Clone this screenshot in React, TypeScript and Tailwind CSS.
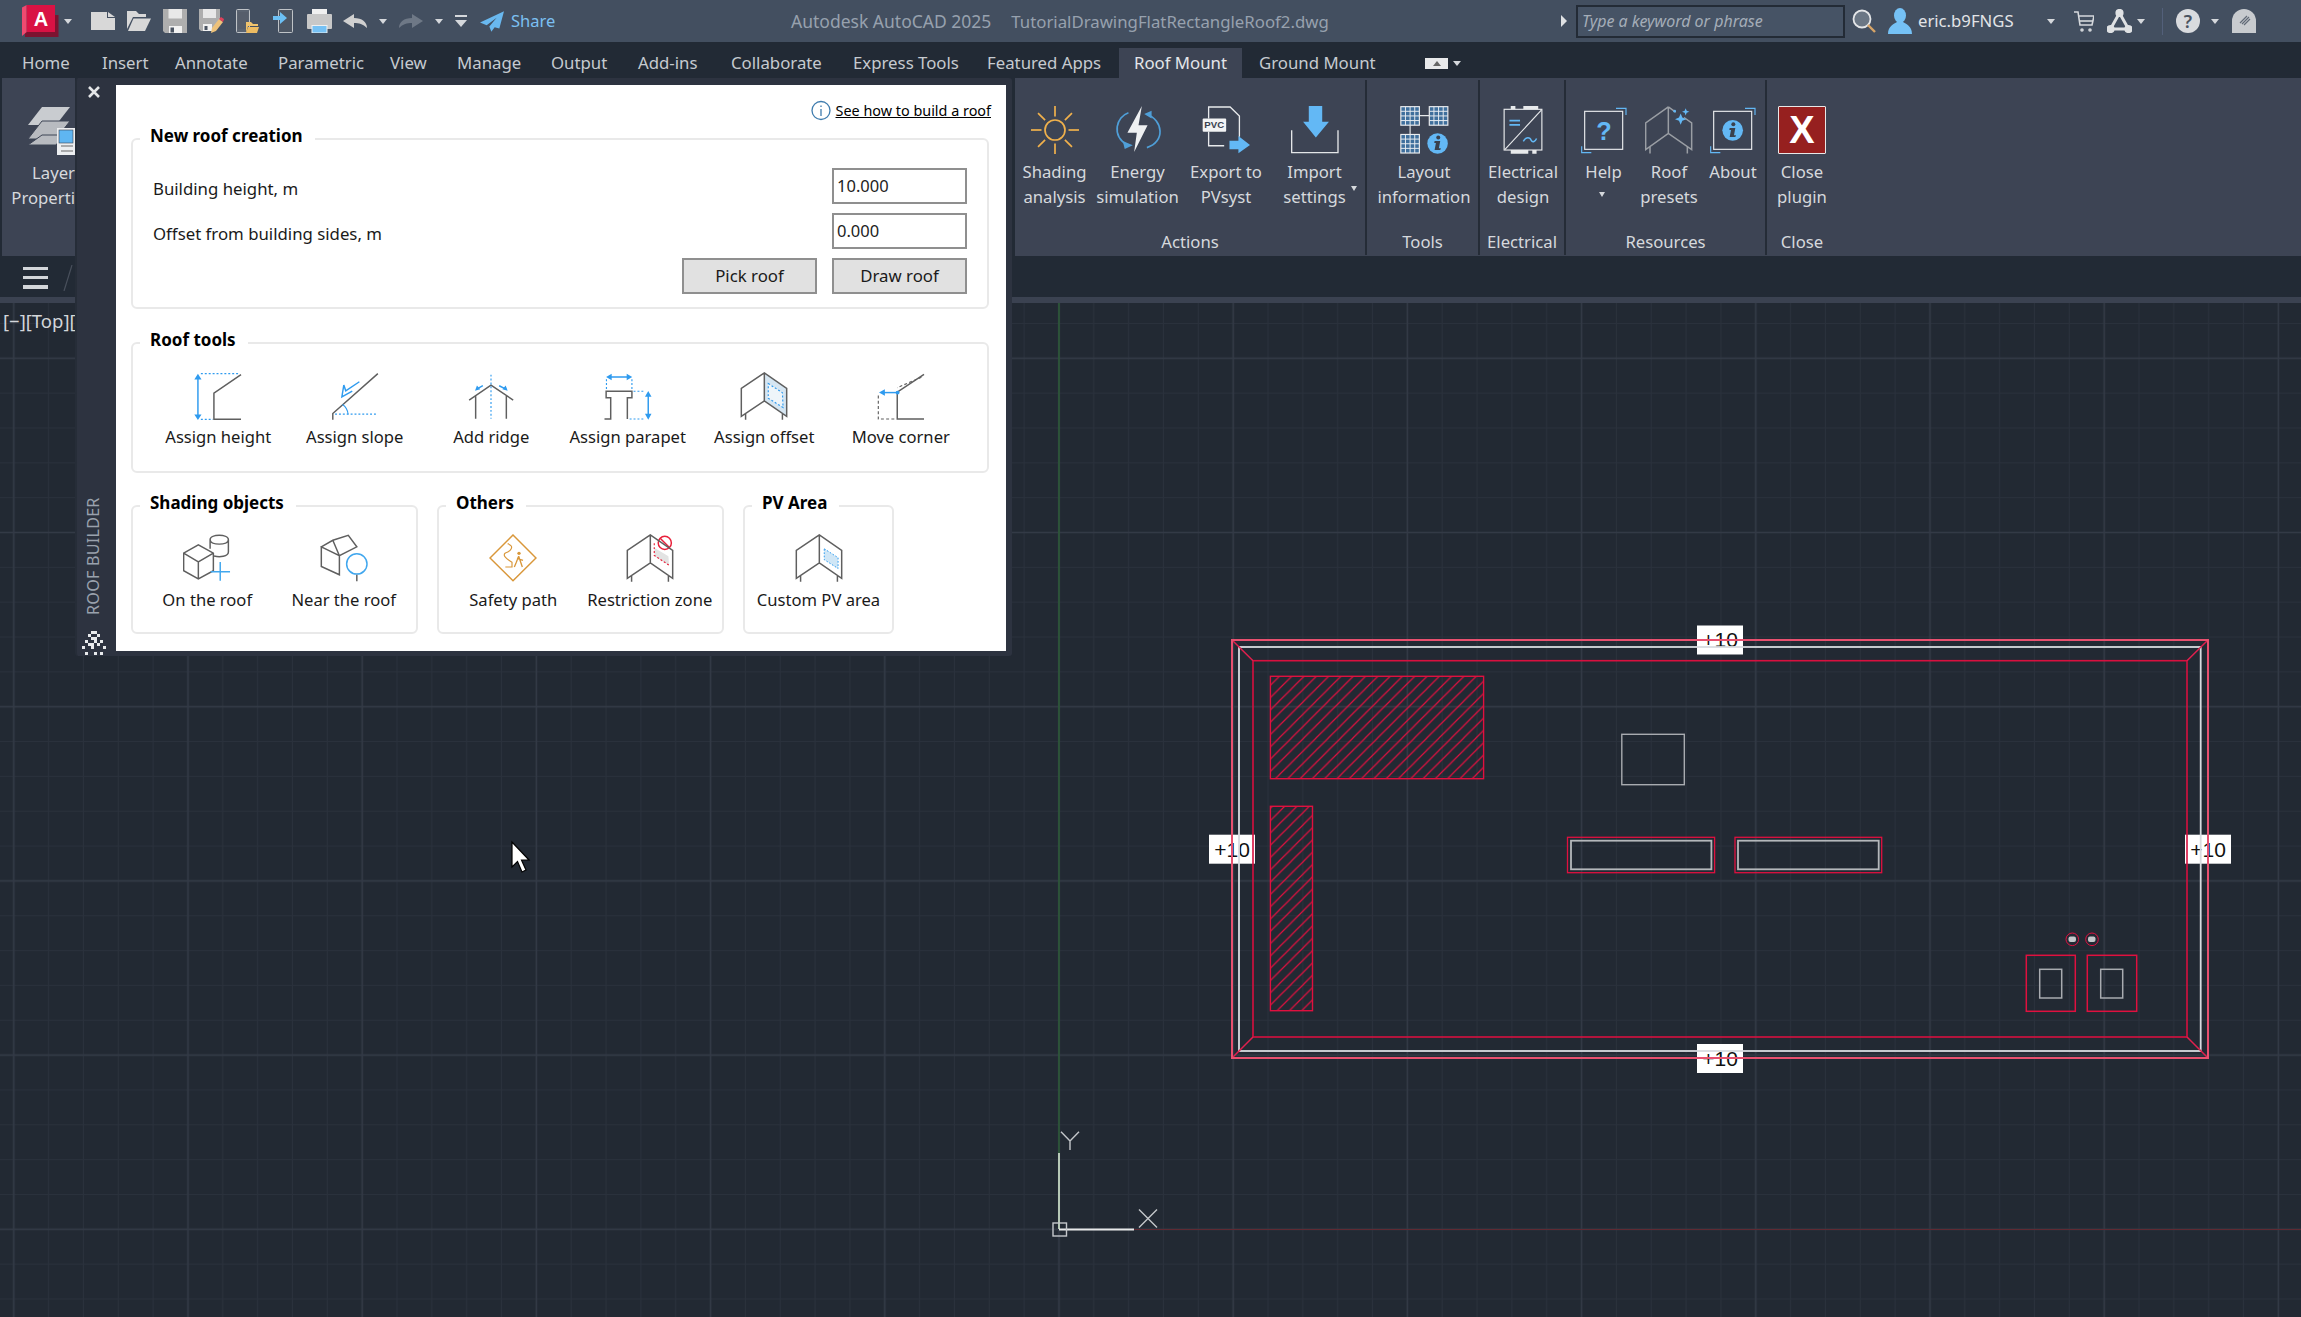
import type { ReactNode } from "react";

const font = "font-['Noto_Sans','Open_Sans',sans-serif]";

const tabs = [
  { label: "Home", cls: "w-[80px]" },
  { label: "Insert", cls: "w-[73px]" },
  { label: "Annotate", cls: "w-[103px]" },
  { label: "Parametric", cls: "w-[112px]" },
  { label: "View", cls: "w-[67px]" },
  { label: "Manage", cls: "w-[94px]" },
  { label: "Output", cls: "w-[87px]" },
  { label: "Add-ins", cls: "w-[93px]" },
  { label: "Collaborate", cls: "w-[122px]" },
  { label: "Express Tools", cls: "w-[134px]" },
  { label: "Featured Apps", cls: "w-[147px]" },
];

function Caret({ className = "" }: { className?: string }) {
  return <span className={"h-0 w-0 border-x-[4px] border-t-[5px] border-x-transparent border-t-[#d5d8dc] " + className} />;
}

function TitleBar() {
  return (
    <div className="flex h-[42px] shrink-0 items-center bg-[#434f60]">
      <div className="flex w-[791px] shrink-0 items-center">
        <svg width="37" height="33" viewBox="0 0 37 33" className="ml-[22px]">
          <path d="M3 27 H33 V10 H36.5 V32 H3 Z" fill="#7c1330" />
          <path d="M0 2.5 L4.7 0 V27 L0 31 Z" fill="#ef4a70" />
          <rect x="4.7" y="0" width="28.3" height="27" fill="#d91244" />
          <text x="19" y="21" textAnchor="middle" fontFamily="Liberation Sans" fontWeight="700" fontSize="20" fill="#fff">A</text>
        </svg>
        <Caret className="ml-[5px]" />
        <svg width="24" height="18" viewBox="0 0 24 18" className="ml-[19px]">
          <path d="M0 0 H16 V6 H24 V18 H0 Z" fill="#d8d8d8" />
          <path d="M17 0 L24 5 H17 Z" fill="#d8d8d8" />
        </svg>
        <svg width="24" height="20" viewBox="0 0 24 20" className="ml-[12px]">
          <path d="M0 20 V0 H9 L12 3 H19 V6 H6 L0 18 Z" fill="#d8d8d8" />
          <path d="M6.5 7.5 H24 L18 20 H1 Z" fill="#d8d8d8" />
        </svg>
        <svg width="24" height="24" viewBox="0 0 24 24" className="ml-[12px]">
          <path d="M0 0 H24 V24 H2 L0 22 Z" fill="#aeaeae" />
          <rect x="5.5" y="0" width="13.5" height="9.5" fill="#e8e8e8" />
          <rect x="6" y="17" width="13" height="7" fill="#f2f2f2" />
          <rect x="7.5" y="18.5" width="3.5" height="5" fill="#4b5462" />
        </svg>
        <svg width="25" height="24" viewBox="0 0 25 24" className="ml-[12px]">
          <path d="M0 0 H21 V14 L14 22 H2 L0 20 Z" fill="#aeaeae" />
          <rect x="4" y="0" width="13" height="9" fill="#e8e8e8" />
          <rect x="4" y="15" width="9" height="7" fill="#f2f2f2" />
          <rect x="5.5" y="17" width="3" height="4" fill="#4b5462" />
          <path d="M12 24 L13 19 L20 10 L24 13 L17 22 Z" fill="#eec27a" />
          <path d="M20 10 L22 8 L25 10 L24 13 Z" fill="#e0405a" />
        </svg>
        <svg width="23" height="24" viewBox="0 0 23 24" className="ml-[12px]">
          <rect x="0.5" y="0.5" width="13" height="23" rx="1" fill="#5a6370" stroke="#bfc3c7" />
          <rect x="2" y="3" width="10" height="17" fill="#565e6b" />
          <path d="M10 13 H15 L17 15 H22 V17 H12 L10 24 Z" fill="#f0c36d" />
          <path d="M12 18 H23 L21 24 H10 Z" fill="#eebc62" />
        </svg>
        <svg width="20" height="24" viewBox="0 0 20 24" className="ml-[14px]">
          <rect x="5.5" y="0.5" width="14" height="23" rx="1" fill="#4d5663" stroke="#bfc3c7" />
          <path d="M0 7 H7 V3 L14 9 L7 15 V11 H0 Z" fill="#6cc0f5" />
        </svg>
        <svg width="25" height="24" viewBox="0 0 25 24" className="ml-[14px]">
          <rect x="5" y="0" width="15" height="7" fill="#f0f0f0" />
          <rect x="0" y="5" width="25" height="15" rx="1" fill="#c8c8c8" />
          <rect x="5" y="16.5" width="15" height="7.5" fill="#76c1f4" stroke="#eef0f1" />
        </svg>
        <svg width="24" height="14" viewBox="0 0 24 14" className="ml-[11px]">
          <path d="M0 7 L11 0 V4 C19 4 24 8 24 14 C20 10 16 9 11 9 V14 Z" fill="#d0d0d0" />
        </svg>
        <Caret className="ml-[12px]" />
        <svg width="24" height="14" viewBox="0 0 24 14" className="ml-[12px]">
          <path d="M24 7 L13 0 V4 C5 4 0 8 0 14 C4 10 8 9 13 9 V14 Z" fill="#6e7886" />
        </svg>
        <Caret className="ml-[12px]" />
        <svg width="12" height="12" viewBox="0 0 12 12" className="ml-[12px]">
          <rect width="12" height="2" fill="#d5d8dc" />
          <path d="M0 5 H12 L6 12 Z" fill="#d5d8dc" />
        </svg>
        <svg width="24" height="21" viewBox="0 0 72 62" className="ml-[13px]">
          <path d="M72 0 L0 34 L20 42 L50 20 L28 46 L34 62 L44 48 L58 52 Z" fill="#69b8ef" />
        </svg>
        <span className="ml-[7px] text-[16.5px] text-[#7cc0f2]">Share</span>
      </div>
      <div className="w-[770px] shrink-0 whitespace-nowrap text-[#97a1ae]">
        <span className="text-[17.5px]">Autodesk AutoCAD 2025</span>
        <span className="ml-[20px] text-[16.8px]">TutorialDrawingFlatRectangleRoof2.dwg</span>
      </div>
      <div className="flex flex-1 items-center">
        <span className="h-0 w-0 border-y-[6px] border-l-[6px] border-y-transparent border-l-[#dfe1e3]" />
        <div className="ml-[9px] flex h-[33px] w-[269px] items-center border-2 border-[#232b36] bg-[#465365] pl-[4px] text-[16px] text-[#a4adb8] italic">
          Type a keyword or phrase
        </div>
        <svg width="24" height="24" viewBox="0 0 24 24" className="ml-[7px]">
          <circle cx="10" cy="10" r="8.5" fill="#6b7785" stroke="#e4e6e8" strokeWidth="1.8" />
          <path d="M16 16 L23 23" stroke="#d7a467" strokeWidth="2.4" />
        </svg>
        <svg width="24" height="26" viewBox="0 0 24 26" className="ml-[12px]">
          <ellipse cx="12" cy="7.5" rx="6" ry="7.5" fill="#75c1f5" />
          <path d="M0 26 C0 18 6 16 9 14 H15 C18 16 24 18 24 26 Z" fill="#75c1f5" />
        </svg>
        <span className="ml-[6px] w-[129px] text-[16.7px] text-[#e2e4e7]">eric.b9FNGS</span>
        <Caret />
        <svg width="20" height="21" viewBox="0 0 20 21" className="ml-[19px]" fill="none" stroke="#d5d8dc" strokeWidth="1.6">
          <path d="M0 1 H4 L6 14 H18 L20 5 H5" />
          <path d="M6 10 H19" />
          <circle cx="8" cy="19" r="1" />
          <circle cx="16" cy="19" r="1" />
        </svg>
        <svg width="25" height="24" viewBox="0 0 25 24" className="ml-[13px]" fill="none" stroke="#dfe1e3" strokeWidth="3">
          <path d="M12.5 4 L3.5 20 H21.5 Z" />
          <circle cx="12.5" cy="4" r="2.6" fill="#dfe1e3" />
          <circle cx="3.5" cy="20" r="2.6" fill="#dfe1e3" />
          <circle cx="21.5" cy="20" r="2.6" fill="#dfe1e3" />
        </svg>
        <Caret className="ml-[5px]" />
        <div className="ml-[17px] h-[27px] w-[1px] bg-[#53607a]" />
        <div className="ml-[13px] flex h-[24px] w-[24px] items-center justify-center rounded-full bg-[#d9dbde] text-[18px] font-semibold text-[#4a5361]">?</div>
        <Caret className="ml-[11px]" />
        <svg width="24" height="24" viewBox="0 0 24 24" className="ml-[13px]">
          <path d="M0 24 V12 A12 12 0 0 1 24 12 V24 Z" fill="#c8cbcf" />
          <path d="M8 14 L15 7 M10 15 L17 8 M12 16 L18 10" stroke="#606a77" strokeWidth="1.2" />
        </svg>
      </div>
    </div>
  );
}

function TabRow() {
  return (
    <div className="flex h-[36px] shrink-0 items-end bg-[#222a35] pl-[7px] text-[16.8px] text-[#c6cad0]">
      {tabs.map((t) => (
        <div key={t.label} className={"flex h-[30px] items-center whitespace-nowrap pl-[15px] " + t.cls}>
          {t.label}
        </div>
      ))}
      <div className="flex h-[30px] w-[123px] items-center justify-center bg-[#3d4454] text-[#e4e6ea]">Roof Mount</div>
      <div className="flex h-[30px] w-[183px] items-center whitespace-nowrap pl-[17px]">Ground Mount</div>
      <div className="mb-[9px] flex h-[11px] w-[23px] items-center justify-center bg-[#e8e9eb]">
        <span className="h-0 w-0 border-x-[4px] border-b-[5px] border-x-transparent border-b-[#666]" />
      </div>
      <Caret className="mb-[12px] ml-[5px]" />
    </div>
  );
}

function Sep() {
  return <div className="mt-[2px] h-[175px] w-[2px] shrink-0 bg-[#252c37]" />;
}

function RibbonItem({ icon, lines, cls, caret }: { icon: ReactNode; lines: string[]; cls: string; caret?: ReactNode }) {
  return (
    <div className={"relative flex flex-col items-center " + cls}>
      <div className="flex h-[48px] items-center justify-center">{icon}</div>
      <div className="mt-[5px] whitespace-nowrap text-center leading-[25px]">
        {lines.map((l) => (
          <div key={l}>{l}</div>
        ))}
      </div>
      {caret}
    </div>
  );
}

function Panel({ title, cls, rowCls = "justify-center", children }: { title: string; cls: string; rowCls?: string; children: ReactNode }) {
  return (
    <div className={"flex h-full shrink-0 flex-col justify-between " + cls}>
      <div className={"flex pt-[28px] " + rowCls}>{children}</div>
      <div className="flex h-[28px] items-center justify-center">{title}</div>
    </div>
  );
}

function SunIcon() {
  const rays = [0, 45, 90, 135, 180, 225, 270, 315];
  return (
    <svg width="48" height="48" viewBox="0 0 48 48" fill="none" stroke="#f0b14c" strokeWidth="1.7">
      <circle cx="24" cy="24" r="10" />
      {rays.map((r) => (
        <path key={r} d={r % 90 === 0 ? "M24 0 V10.5" : "M24 0 V10"} transform={`rotate(${r} 24 24)`} />
      ))}
    </svg>
  );
}

function EnergyIcon() {
  return (
    <svg width="48" height="48" viewBox="282 18 143 143" fill="none">
      <path d="M325 38 C290 50 272 105 322 135" stroke="#4f9fd8" strokeWidth="5" />
      <path d="M378 42 C430 60 435 125 380 142" stroke="#4f9fd8" strokeWidth="5" />
      <path d="M308 122 L338 135 L314 146 Z M394 55 L372 42 L394 32 Z" fill="#4f9fd8" />
      <path d="M365 18 L322 98 H350 L342 155 L382 75 H355 Z" fill="#eef0f2" />
    </svg>
  );
}

function ExportIcon() {
  return (
    <svg width="48" height="48" viewBox="545 18 145 143" fill="none">
      <path d="M565 55 V20 H630 L658 47 V110 M565 95 V137 H612" stroke="#e8eaec" strokeWidth="4" />
      <rect x="547" y="55" width="71" height="40" rx="3" fill="#f2f3f4" />
      <text x="582" y="85" textAnchor="middle" fontFamily="Liberation Sans" fontWeight="700" fontSize="29" fill="#39414e">PVC</text>
      <path d="M628 122 H655 V108 L690 135 L655 160 V148 H628 Z" fill="#63b8f5" />
    </svg>
  );
}

function ImportIcon() {
  return (
    <svg width="48" height="48" viewBox="815 18 143 143" fill="none">
      <path d="M868 18 H908 V65 H928 L889 112 L851 65 H868 Z" fill="#63b8f5" />
      <path d="M817 90 V157 H955 V90" stroke="#e4e6e8" strokeWidth="4" />
    </svg>
  );
}

function LayoutIcon() {
  const cells = (x: number, y: number) => (
    <g key={x + "-" + y}>
      <rect x={x} y={y} width="56" height="56" fill="#3f6f9c" stroke="#eceef0" strokeWidth="3.5" />
      <path d={`M${x + 14} ${y} V${y + 56} M${x + 28} ${y} V${y + 56} M${x + 42} ${y} V${y + 56} M${x} ${y + 14} H${x + 56} M${x} ${y + 28} H${x + 56} M${x} ${y + 42} H${x + 56}`} stroke="#e6ebf0" strokeWidth="3" />
    </g>
  );
  return (
    <svg width="49" height="48" viewBox="32 18 147 145" fill="none">
      {cells(34, 20)}
      {cells(120, 20)}
      {cells(34, 104)}
      <path d="M90 47 H120 M62 76 V104" stroke="#e6e8ea" strokeWidth="3.5" />
      <circle cx="145" cy="131" r="31" fill="#63b8f5" />
      <circle cx="147" cy="113" r="6" fill="#39414e" />
      <path d="M136 124 H153 L149 146 H155 L153 151 H136 L140 130 H135 Z" fill="#39414e" />
    </svg>
  );
}

function ElectricalIcon() {
  return (
    <svg width="40" height="48" viewBox="339 18 120 145" fill="none">
      <rect x="342" y="28" width="114" height="123" stroke="#e8eaec" strokeWidth="3.5" />
      <path d="M362 18 H376 V28 H362 Z M400 18 H445 V28 H400 Z M362 151 H415 V162 H362 Z M427 151 H440 V162 H427 Z" fill="#e8eaec" />
      <path d="M344 150 L455 30" stroke="#e8eaec" strokeWidth="3.5" />
      <path d="M358 62 H390 M358 75 H390" stroke="#63b8f5" strokeWidth="5" />
      <path d="M400 125 C408 110 420 112 424 122 C428 130 436 125 440 116" stroke="#63b8f5" strokeWidth="4.5" />
    </svg>
  );
}

function FrameIcon({ children }: { children: ReactNode }) {
  return (
    <svg width="46" height="48" viewBox="571 18 138 142" fill="none">
      <rect x="582" y="33" width="114" height="114" stroke="#e8eaec" strokeWidth="3.5" />
      <path d="M676 24 H706 V44 M573 138 V157 H602" stroke="#63b8f5" strokeWidth="3.5" />
      {children}
    </svg>
  );
}

function PresetIcon() {
  return (
    <svg width="48" height="48" viewBox="768 18 144 143" fill="none" stroke="#9a9ea4" strokeWidth="4.5">
      <path d="M838 20 L770 68 V148 L838 100 L908 148 V68 L885 52 M838 20 V100 M838 20 L860 36" />
      <path d="M783 140 V160 M895 140 V160" />
      <path d="M875 40 L880 52 L892 57 L880 62 L875 74 L870 62 L858 57 L870 52 Z" fill="#63b8f5" stroke="none" />
      <path d="M890 24 L893 32 L901 35 L893 38 L890 46 L887 38 L879 35 L887 32 Z" fill="#63b8f5" stroke="none" />
      <circle cx="857" cy="33" r="4" fill="#63b8f5" stroke="none" />
    </svg>
  );
}

function Ribbon() {
  return (
    <div className="flex h-[178px] shrink-0 bg-[#222a35] text-[16.7px] text-[#d6d9dd]">
      <div className="ml-[2px] flex w-[73px] shrink-0 flex-col items-center overflow-hidden bg-[#3d4454] pt-[29px]">
        <svg width="47" height="48" viewBox="0 0 47 48" className="self-end">
          <path d="M14 0 H42 L28 18 H0 Z" fill="#c9ccd0" />
          <path d="M14 14 H42 L28 32 H0 Z" fill="#b8bbc0" stroke="#3d4454" />
          <path d="M14 28 H36 L28 38 H0 Z" fill="#b8bbc0" stroke="#3d4454" />
          <rect x="29" y="21" width="18" height="27" fill="#eceef0" />
          <rect x="31" y="23" width="14" height="13" fill="#5fb6f2" stroke="#39414e" strokeWidth="0.6" />
          <path d="M33 39 H45 M33 44 H45" stroke="#666" strokeWidth="1" />
        </svg>
        <div className="mt-[5px] flex w-[73px] flex-col items-end leading-[25px] whitespace-nowrap">
          <div>Layer</div>
          <div>Properti</div>
        </div>
      </div>
      <div className="w-[940px] shrink-0" />
      <div className="flex h-full flex-1 bg-[#3d4454]">
        <Panel title="Actions" cls="w-[350px]" rowCls="justify-start">
          <RibbonItem icon={<SunIcon />} lines={["Shading", "analysis"]} cls="w-[79px]" />
          <RibbonItem icon={<EnergyIcon />} lines={["Energy", "simulation"]} cls="w-[87px]" />
          <RibbonItem icon={<ExportIcon />} lines={["Export to", "PVsyst"]} cls="w-[90px]" />
          <RibbonItem
            icon={<ImportIcon />}
            lines={["Import", "settings"]}
            cls="w-[87px]"
            caret={<span className="absolute top-[80px] right-[1px] h-0 w-0 border-x-[3.5px] border-t-[5px] border-x-transparent border-t-[#d5d8dc]" />}
          />
        </Panel>
        <Sep />
        <Panel title="Tools" cls="w-[111px]">
          <RibbonItem icon={<LayoutIcon />} lines={["Layout", "information"]} cls="w-[111px] pl-[3px]" />
        </Panel>
        <Sep />
        <Panel title="Electrical" cls="w-[84px]">
          <RibbonItem icon={<ElectricalIcon />} lines={["Electrical", "design"]} cls="w-[84px] pl-[2px]" />
        </Panel>
        <Sep />
        <Panel title="Resources" cls="w-[199px]" rowCls="justify-start pl-[5px]">
          <RibbonItem
            icon={
              <FrameIcon>
                <text x="640" y="118" textAnchor="middle" fontFamily="Liberation Sans" fontWeight="700" fontSize="76" fill="#63b8f5">?</text>
              </FrameIcon>
            }
            lines={["Help"]}
            cls="w-[65px]"
            caret={<span className="absolute top-[86px] left-[28px] h-0 w-0 border-x-[3.5px] border-t-[5px] border-x-transparent border-t-[#d5d8dc]" />}
          />
          <RibbonItem icon={<PresetIcon />} lines={["Roof", "presets"]} cls="w-[66px]" />
          <RibbonItem
            icon={
              <FrameIcon>
                <circle cx="639" cy="90" r="31" fill="#63b8f5" />
                <circle cx="641" cy="72" r="6" fill="#39414e" />
                <path d="M630 83 H647 L643 105 H649 L647 110 H630 L634 89 H629 Z" fill="#39414e" />
              </FrameIcon>
            }
            lines={["About"]}
            cls="w-[62px]"
          />
        </Panel>
        <Sep />
        <Panel title="Close" cls="w-[70px]">
          <RibbonItem
            icon={
              <div className="flex h-[48px] w-[48px] items-center justify-center rounded-[1px] border border-[#e8e8e8] bg-[#96201f] font-['Liberation_Sans'] text-[38px] leading-none font-bold text-white">
                X
              </div>
            }
            lines={["Close", "plugin"]}
            cls="w-[70px]"
          />
        </Panel>
      </div>
    </div>
  );
}

function Canvas() {
  const labels = [
    { x: 1697, y: 625.5, w: 46, h: 29, tx: 1720, ty: 647 },
    { x: 1697, y: 1044, w: 46, h: 29, tx: 1720, ty: 1065.5 },
    { x: 1209, y: 834.7, w: 46, h: 29, tx: 1232, ty: 856.5 },
    { x: 2185, y: 834.7, w: 46, h: 29, tx: 2208, ty: 856.5 },
  ];
  return (
    <div className="min-h-0 flex-1 bg-[#222933]">
      <svg viewBox="0 303 2301 1014" className="block h-full w-full" fill="none">
        <defs>
          <pattern id="minor" patternUnits="userSpaceOnUse" x="1041.58" y="1211.88" width="34.84" height="34.84">
            <path d="M17.42 0 V34.84 M0 17.42 H34.84" stroke="#2a313c" strokeWidth="1" />
          </pattern>
          <pattern id="major" patternUnits="userSpaceOnUse" x="971.9" y="1142.2" width="174.2" height="174.2">
            <path d="M87.1 0 V174.2 M0 87.1 H174.2" stroke="#333a46" strokeWidth="1.4" />
          </pattern>
          <pattern id="hatch" patternUnits="userSpaceOnUse" width="12.3" height="12.3">
            <path d="M-1 1 L1 -1 M0 12.3 L12.3 0 M11.3 13.3 L13.3 11.3" stroke="#e0103f" strokeWidth="1.2" />
          </pattern>
        </defs>
        <rect x="0" y="303" width="2301" height="1014" fill="url(#minor)" />
        <rect x="0" y="303" width="2301" height="1014" fill="url(#major)" />

        <path d="M1059 303 V1153" stroke="#2c5a37" strokeWidth="1.6" />
        <path d="M1134 1229.5 H2301" stroke="#5f2a33" strokeWidth="1.2" />
        <path d="M1059 1153 V1229" stroke="#b6c8b6" strokeWidth="2" />
        <path d="M1059 1229.5 H1134" stroke="#e8e9ea" strokeWidth="2" />
        <rect x="1053" y="1223" width="13.5" height="13" stroke="#c4c7cb" strokeWidth="1.4" />
        <path d="M1061 1131.7 L1070 1141 L1079 1131.7 M1070 1141 V1150" stroke="#c4c7cb" strokeWidth="1.4" />
        <path d="M1139 1209.5 L1157 1227.5 M1157 1209.5 L1139 1227.5" stroke="#c4c7cb" strokeWidth="1.4" />

        {labels.map((l) => (
          <g key={l.tx + "-" + l.ty}>
            <rect x={l.x} y={l.y} width={l.w} height={l.h} fill="#fff" />
            <text x={l.tx} y={l.ty} textAnchor="middle" fontFamily="Liberation Sans" fontSize="21" fill="#111">+10</text>
          </g>
        ))}

        <rect x="1239" y="647" width="961.7" height="404" stroke="#d8dbdf" strokeWidth="1.8" />
        <rect x="1253" y="660.7" width="934" height="376.3" stroke="#d8103f" strokeWidth="1.6" />
        <path d="M1232 640 L1253 660.7 M2208 640 L2187 660.7 M1232 1058 L1253 1037 M2208 1058 L2187 1037" stroke="#e0204e" strokeWidth="1.5" />
        <rect x="1232" y="640" width="976" height="418" stroke="#e8506f" strokeWidth="2" />

        <rect x="1270.4" y="676.3" width="213.2" height="102.4" fill="url(#hatch)" stroke="#e0103f" strokeWidth="1.4" />
        <rect x="1270.4" y="806.3" width="42.1" height="204.4" fill="url(#hatch)" stroke="#e0103f" strokeWidth="1.4" />
        <rect x="1621.8" y="734.3" width="62.5" height="50.4" stroke="#a8abb0" strokeWidth="1.4" />

        <rect x="1567.5" y="837.3" width="147.1" height="35.4" stroke="#e0103f" strokeWidth="1.3" />
        <rect x="1571" y="840.7" width="140.4" height="28.6" stroke="#b4b7bb" strokeWidth="1.8" />
        <rect x="1735" y="837.3" width="146.7" height="35.4" stroke="#e0103f" strokeWidth="1.3" />
        <rect x="1738" y="840.7" width="140.7" height="28.6" stroke="#b4b7bb" strokeWidth="1.8" />

        <circle cx="2072.3" cy="939.3" r="6.3" stroke="#e0103f" strokeWidth="1" />
        <circle cx="2092" cy="939.3" r="6.3" stroke="#e0103f" strokeWidth="1" />
        <rect x="2068.5" y="936.5" width="7.5" height="5.5" rx="2" fill="#c4c7cb" />
        <rect x="2088" y="936.5" width="7.5" height="5.5" rx="2" fill="#c4c7cb" />
        <rect x="2026.3" y="955.3" width="49" height="56" stroke="#e0103f" strokeWidth="1.5" />
        <rect x="2039.7" y="969.3" width="22" height="28.7" stroke="#a8abb0" strokeWidth="1.5" />
        <rect x="2087.3" y="955.3" width="49.4" height="56" stroke="#e0103f" strokeWidth="1.5" />
        <rect x="2100.7" y="969.3" width="22" height="28.7" stroke="#a8abb0" strokeWidth="1.5" />

        <path d="M512 842 V867 L517.5 861.5 L522 872 L526 870 L521.5 860 H529 Z" fill="#fff" stroke="#000" strokeWidth="1.2" />
      </svg>
    </div>
  );
}

const G = "#5f5f5f";
const B = "#2f9bef";

function ToolSvg({ box, children }: { box: string; children: ReactNode }) {
  return (
    <svg width="48" height="47" viewBox={box} fill="none" strokeWidth="4.5">
      {children}
    </svg>
  );
}

function Book({ children }: { children?: ReactNode }) {
  return (
    <svg width="48" height="48" viewBox="0 0 144 146" fill="none" strokeWidth="4.5">
      {children}
      <path d="M73 3 L3 50 V135 L73 88 L141 135 V50 Z M73 3 V88 M16 125 V145 M128 125 V145" stroke={G} />
    </svg>
  );
}

function ToolItem({ icon, label, textCls = "mt-[5px]" }: { icon: ReactNode; label: string; textCls?: string }) {
  return (
    <div className="flex w-[136.5px] shrink-0 flex-col items-center">
      <div className="flex h-[48px] items-center justify-center">{icon}</div>
      <div className={"text-center text-[16.6px] leading-[24px] whitespace-nowrap text-[#1a1a1a] " + textCls}>{label}</div>
    </div>
  );
}

function Group({ title, cls, children }: { title: string; cls: string; children: ReactNode }) {
  return (
    <fieldset className={"rounded-[6px] border-2 border-[#e9e9e9] " + cls}>
      <legend className="relative -top-[3px] ml-[7px] pr-[12px] pl-[10px] text-[17px] leading-[24px] font-bold text-black">{title}</legend>
      {children}
    </fieldset>
  );
}

function FieldRow({ label, value }: { label: string; value: string }) {
  return (
    <div className="flex h-[36px] items-center justify-between">
      <span className="pt-[6px] text-[16.8px] text-[#1a1a1a]">{label}</span>
      <div className="flex h-[36px] w-[135px] items-center border-2 border-[#8f8f8f] bg-white pl-[3px] text-[16.5px] text-[#222]">{value}</div>
    </div>
  );
}

function Palette() {
  return (
    <div className="absolute top-[78px] left-[75px] flex h-[578px] w-[937px] rounded-[3px] border-l-2 border-[#262d38] bg-[#2d3340]">
      <div className="relative w-[39px] shrink-0">
        <svg width="12" height="12" viewBox="0 0 12 12" className="absolute top-[8px] left-[11px]">
          <path d="M1 1 L11 11 M11 1 L1 11" stroke="#e4e6e8" strokeWidth="2.6" />
        </svg>
        <div className="absolute top-[418px] left-[4px] flex h-[120px] w-[24px] items-center justify-center">
          <span className="-rotate-90 text-[16.2px] tracking-[0.2px] whitespace-nowrap text-[#9aa1ad]">ROOF BUILDER</span>
        </div>
        <svg width="24" height="24" viewBox="0 0 8 8" className="absolute top-[553px] left-[5px]" fill="#e8eaec">
          <path d="M3 0 H5 V1 H3 Z M2 1 H3 V2 H2 Z M5 1 H6 V2 H5 Z M3 2 H5 V3 H3 Z M1 3 H2 V4 H1 Z M4 3 H5 V4 H4 Z M6 3 H7 V4 H6 Z M2 4 H4 V5 H2 Z M5 4 H6 V5 H5 Z M0 5 H1 V6 H0 Z M3 5 H4 V6 H3 Z M7 5 H8 V6 H7 Z M1 7 H2 V8 H1 Z M4 7 H5 V8 H4 Z M6 7 H7 V8 H6 Z" />
        </svg>
      </div>
      <div className="mt-[7px] mb-[5px] w-[890px] shrink-0 bg-white pr-[17px] pl-[15px]">
        <div className="-mr-[2px] flex h-[42px] items-start justify-end gap-[5px] pt-[15px]">
          <svg width="20" height="21" viewBox="0 0 20 21" fill="none" stroke="#3f7cae" strokeWidth="1.3">
            <circle cx="10" cy="10.5" r="9" />
            <path d="M10 9 V16 M10 5.5 V7" />
          </svg>
          <span className="text-[14.4px] leading-[21px] text-black underline">See how to build a roof</span>
        </div>

        <Group title="New roof creation" cls="">
          <div className="flex flex-col gap-[9px] pt-[17px] pr-[20px] pb-[13px] pl-[20px]">
            <FieldRow label="Building height, m" value="10.000" />
            <FieldRow label="Offset from building sides, m" value="0.000" />
            <div className="flex justify-end gap-[15px]">
              <button className="flex h-[36px] w-[135px] items-center justify-center border-2 border-[#8f8f8f] bg-[#e1e1e1] text-[16.8px] text-[#1a1a1a]">Pick roof</button>
              <button className="flex h-[36px] w-[135px] items-center justify-center border-2 border-[#8f8f8f] bg-[#e1e1e1] text-[16.8px] text-[#1a1a1a]">Draw roof</button>
            </div>
          </div>
        </Group>

        <Group title="Roof tools" cls="mt-[22px]">
          <div className="flex pt-[17px] pb-[22px] pl-[17px]">
            <ToolItem
              label="Assign height"
              icon={
                <ToolSvg box="375 158 145 144">
                  <path d="M518 163 L435 220 V300 H518" stroke={G} />
                  <path d="M386 170 V292" stroke={B} />
                  <path d="M375 178 L386 160 L397 178 Z M375 285 L386 302 L397 285 Z" fill={B} />
                  <path d="M395 160 H515 M395 300 H432" stroke={B} strokeDasharray="6 6" strokeWidth="3.5" />
                </ToolSvg>
              }
            />
            <ToolItem
              label="Assign slope"
              icon={
                <ToolSvg box="783 158 147 145">
                  <path d="M927 160 L788 283 V302" stroke={G} />
                  <path d="M795 285 H927" stroke={B} strokeDasharray="6 6" strokeWidth="3.5" />
                  <path d="M818 255 A40 40 0 0 1 835 285" stroke={B} strokeWidth="3.5" />
                  <path d="M870 185 L828 213 L822 195 L816 232 L848 214" stroke={B} />
                </ToolSvg>
              }
            />
            <ToolItem
              label="Add ridge"
              icon={
                <ToolSvg box="1195 158 140 144">
                  <path d="M1198 241 L1265 195 L1333 241 M1218 228 V298 M1312 228 V298" stroke={G} />
                  <path d="M1265 163 V298" stroke={B} strokeDasharray="6 6" strokeWidth="3.5" />
                  <path d="M1240 197 L1220 208 M1290 197 L1312 208" stroke={B} />
                  <path d="M1216 212 L1222 196 L1232 208 Z M1316 212 L1310 196 L1300 208 Z" fill={B} />
                </ToolSvg>
              }
            />
            <ToolItem
              label="Assign parapet"
              icon={
                <ToolSvg box="252 159 146 144">
                  <path d="M253 300 H272 V235 H258 V215 H337 V235 H323 V300" stroke={G} />
                  <path d="M268 171 H328 M387 226 V290" stroke={B} />
                  <path d="M258 171 L275 161 V181 Z M338 171 L321 161 V181 Z M387 214 L377 232 H397 Z M387 302 L377 284 H397 Z" fill={B} />
                  <path d="M259 178 V212 M337 178 V212 M342 215 H378 M330 300 H378" stroke={B} strokeDasharray="6 6" strokeWidth="3.5" />
                </ToolSvg>
              }
            />
            <ToolItem
              label="Assign offset"
              icon={
                <Book>
                  <path d="M73 3 L141 50 V135 L73 88 Z" fill="#d6e6f2" />
                  <path d="M85 35 L128 63 L130 108 L85 80 Z" stroke={B} strokeDasharray="6 6" strokeWidth="3.5" fill="#eef5fa" />
                </Book>
              }
            />
            <ToolItem
              label="Move corner"
              icon={
                <ToolSvg box="1072 159 145 144">
                  <path d="M1215 163 L1133 218 V300 H1215" stroke={G} />
                  <path d="M1207 172 L1133 204 M1075 228 V300 H1130" stroke={G} strokeDasharray="9 7" strokeWidth="3.5" />
                  <path d="M1090 219 H1133" stroke={B} />
                  <path d="M1077 219 L1095 209 V229 Z" fill={B} />
                  <circle cx="1134" cy="219" r="6" fill={B} />
                </ToolSvg>
              }
            />
          </div>
        </Group>

        <div className="mt-[21px] flex gap-[19px]">
          <Group title="Shading objects" cls="w-[287px]">
            <div className="flex pt-[16px] pb-[20px] pl-[6px]">
              <ToolItem
                label="On the roof"
                textCls="mt-[6px]"
                icon={
                  <svg width="48" height="48" viewBox="338 645 147 146" fill="none" strokeWidth="4.5">
                    <path d="M340 703 L385 678 L431 703 V757 L385 782 L340 757 Z M340 703 L385 730 L431 703 M385 730 V782" stroke={G} />
                    <path d="M421 690 V662 C421 644 477 644 477 662 V700 C477 714 450 716 433 712 M421 662 C421 680 477 680 477 662" stroke={G} />
                    <path d="M452 730 V788 M423 760 H482" stroke="#41a7ee" />
                  </svg>
                }
              />
              <ToolItem
                label="Near the roof"
                textCls="mt-[6px]"
                icon={
                  <svg width="48" height="48" viewBox="746 647 146 144" fill="none" strokeWidth="4.5">
                    <path d="M750 685 L785 665 L832 650 L858 685 L805 712 Z M750 685 V745 L805 770 V712 M785 665 L805 712" stroke={G} />
                    <circle cx="858" cy="737" r="31" stroke="#41a7ee" fill="#fff" />
                    <path d="M858 770 V790" stroke={G} />
                  </svg>
                }
              />
            </div>
          </Group>
          <Group title="Others" cls="w-[287px]">
            <div className="flex pt-[16px] pb-[20px] pl-[6px]">
              <ToolItem
                label="Safety path"
                textCls="mt-[6px]"
                icon={
                  <svg width="48" height="48" viewBox="1256 644 144 142" fill="none" strokeWidth="4.5" stroke="#d9973a">
                    <path d="M1328 646 L1397 715 L1328 783 L1259 715 Z" />
                    <path d="M1312 672 C1335 680 1320 695 1305 700 C1295 708 1310 718 1325 728 V742 H1305" strokeWidth="3.5" />
                    <circle cx="1346" cy="701" r="5" fill="#d9973a" stroke="none" />
                    <path d="M1345 710 L1338 728 L1332 742 M1345 710 L1356 742 M1340 716 L1358 722" strokeWidth="4" />
                  </svg>
                }
              />
              <ToolItem
                label="Restriction zone"
                textCls="mt-[6px]"
                icon={
                  <Book>
                    <path d="M85 42 L128 68 L130 95 L85 68 Z" fill="#e3e3e3" />
                    <path d="M85 28 V65 L130 95" stroke="#e8203a" strokeDasharray="6 6" strokeWidth="3.5" />
                    <circle cx="117" cy="27" r="20" stroke="#e8203a" fill="#fff" />
                    <path d="M103 13 L131 41" stroke="#e8203a" />
                  </Book>
                }
              />
            </div>
          </Group>
          <Group title="PV Area" cls="w-[151px]">
            <div className="flex justify-center pt-[16px] pb-[20px]">
              <ToolItem
                label="Custom PV area"
                textCls="mt-[6px]"
                icon={
                  <Book>
                    <path d="M88 45 L130 72 V105 L88 78 Z" fill="#cfe6f6" stroke={B} strokeDasharray="5 5" strokeWidth="3" />
                  </Book>
                }
              />
            </div>
          </Group>
        </div>
      </div>
    </div>
  );
}

export default function App() {
  return (
    <div className={"relative flex h-screen w-full flex-col overflow-hidden bg-[#222933] " + font}>
      <TitleBar />
      <TabRow />
      <Ribbon />
      <div className="flex h-[41px] shrink-0 items-center bg-[#222a35] pt-[2px] pl-[23px]">
        <div className="flex h-[22px] w-[25px] flex-col justify-between">
          <div className="h-[3.5px] bg-[#d3d6da]" />
          <div className="h-[3.5px] bg-[#d3d6da]" />
          <div className="h-[3.5px] bg-[#d3d6da]" />
        </div>
        <svg width="10" height="26" viewBox="0 0 10 26" className="ml-[15px]">
          <path d="M9 0 L1 26" stroke="#49505c" strokeWidth="1.2" />
        </svg>
      </div>
      <div className="h-[6px] shrink-0 bg-[#3b4251]" />
      <Canvas />
      <div className="absolute top-[307px] left-[3px] text-[18.5px] text-[#d3d6da]">[−][Top][</div>
      <Palette />
    </div>
  );
}
